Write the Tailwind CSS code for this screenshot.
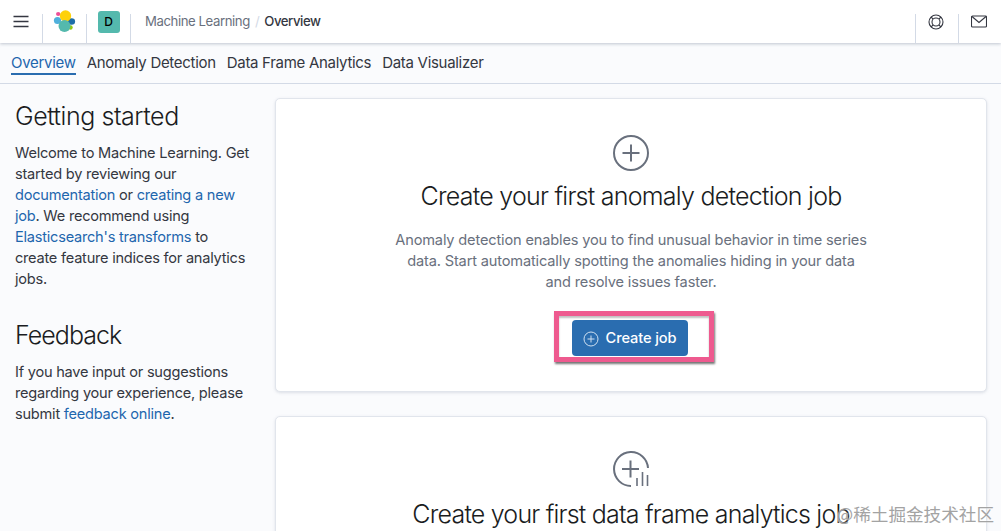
<!doctype html>
<html><head><meta charset="utf-8"><script src="https://cdn.jsdelivr.net/npm/@tailwindcss/browser@4"></script></head>
<body class="w-[1001px] h-[531px] overflow-hidden bg-[#fafbfd] font-['Inter','Noto_Sans',sans-serif] text-[#343741] relative">
<header class="h-[43px] bg-white flex items-stretch shadow-[0_1px_3px_rgba(152,162,179,0.6)] relative z-10">
  <div class="w-[43px] flex items-center justify-center border-r border-[#d3dae6] mt-[14px] pb-[14px]">
    <svg width="16" height="13" viewBox="0 0 16 13"><path d="M0.5 1.5h15M0.5 6.5h15M0.5 11.5h15" stroke="#343741" stroke-width="1.7" fill="none"/></svg>
  </div>
  <div class="w-[44px] flex items-start justify-center border-r border-[#d3dae6] mt-[14px]">
    <svg width="24" height="23" viewBox="0 0 24 23" class="-mt-[5px]">
      <ellipse cx="5.2" cy="5" rx="2.2" ry="2" fill="#ee5097"/>
      <circle cx="4.5" cy="11.5" r="3.6" fill="#4fb0dc"/>
      <ellipse cx="18.5" cy="12.5" rx="3.6" ry="3.2" fill="#1d6ea8"/>
      <circle cx="17.5" cy="18.5" r="2.2" fill="#93c90e"/>
      <circle cx="12.5" cy="7" r="5.7" fill="#fed10a"/>
      <circle cx="11.5" cy="17" r="6" fill="#54b9ad"/>
    </svg>
  </div>
  <div class="w-[44px] flex items-start justify-center border-r border-[#d3dae6] mt-[14px]">
    <div class="w-[22px] h-[22px] -mt-[3px] rounded-[3px] bg-[#54b9ad] flex items-center justify-center text-[12px] font-medium text-black">D</div>
  </div>
  <nav class="flex items-center gap-[5px] pl-[14px] text-[13.2px] leading-none tracking-[-0.43px]">
    <span class="text-[#69707d]">Machine Learning</span><span class="text-[#d3dae6]">/</span><span class="font-medium text-[#343741]">Overview</span>
  </nav>
  <div class="ml-auto flex items-stretch">
    <div class="w-[43px] border-l border-[#d3dae6] mt-[14px] flex justify-center items-start">
      <svg width="16" height="16" viewBox="0 0 16 16" class="-ml-[3px]" fill="none" stroke="#343741" stroke-width="1.1"><circle cx="8" cy="8" r="7"/><circle cx="8" cy="8" r="4"/><path d="M3 3l2.2 2.2M13 3l-2.2 2.2M3 13l2.2-2.2M13 13l-2.2-2.2"/></svg>
    </div>
    <div class="w-[43px] border-l border-[#d3dae6] mt-[14px] flex justify-center items-start">
      <svg width="16" height="13" viewBox="0 0 16 13" class="mt-[1px] -ml-[2px]" fill="none" stroke="#343741" stroke-width="1.1"><rect x="0.5" y="1" width="15" height="11" rx="1"/><path d="M1 1.5l7 6 7-6"/></svg>
    </div>
  </div>
</header>
<div class="h-[41px] border-b border-[#d3dae6] flex items-start gap-[11px] pl-[11px] pt-[9px] text-[15px] leading-[20px] tracking-[-0.3px]">
  <span class="text-[#1e66ad] border-b-2 border-[#2a6db0] pt-[1px]">Overview</span>
  <span class="pt-[1px]">Anomaly Detection</span><span class="pt-[1px]">Data Frame Analytics</span><span class="pt-[1px]">Data Visualizer</span>
</div>
<main class="flex pl-[15px] pr-[14px] pt-[14px] gap-[24px] items-start h-[447px] overflow-hidden">
  <aside class="w-[236px] shrink-0 text-[14.6px] leading-[21px] tracking-[-0.24px]">
    <h2 class="text-[25px] leading-[36px] font-light tracking-[-0.45px] text-[#1a1c21] mb-[9px]">Getting started</h2>
    <p>Welcome to Machine Learning. Get started by reviewing our <a class="text-[#1e66ad]">documentation</a> or <a class="text-[#1e66ad]">creating a new job</a>. We recommend using <a class="text-[#1e66ad]">Elasticsearch's transforms</a> to create feature indices for analytics jobs.</p>
    <h2 class="text-[25px] leading-[36px] font-light tracking-[-0.95px] text-[#1a1c21] mt-[27px] mb-[9px]">Feedback</h2>
    <p>If you have input or suggestions regarding your experience, please submit <a class="text-[#1e66ad]">feedback online</a>.</p>
  </aside>
  <section class="flex-1 flex flex-col gap-[24px] min-w-0">
    <div class="h-[294px] shrink-0 bg-white border border-[#e1e5ec] rounded-[5px] shadow-[0_1px_3px_rgba(152,162,179,0.3)] flex flex-col items-center pt-[36px]">
      <svg width="36" height="36" viewBox="0 0 36 36" fill="none" stroke="#69707d" stroke-width="2"><circle cx="18" cy="18" r="17"/><path d="M18 9.5v17M9.5 18h17"/></svg>
      <h3 class="mt-[7px] text-[25px] leading-[36px] font-light tracking-[-0.75px] text-[#1a1c21]">Create your first anomaly detection job</h3>
      <p class="mt-[16px] w-[475px] text-center text-[14.6px] leading-[21px] tracking-[-0.16px] text-[#69707d]">Anomaly detection enables you to find unusual behavior in time series data. Start automatically spotting the anomalies hiding in your data and resolve issues faster.</p>
      <div class="mt-[18px] ml-[5px] w-[160px] h-[51px] border-[5px] border-[#ee5a8f] shadow-[1px_2px_2px_rgba(0,0,0,0.55),inset_0_2px_2px_rgba(0,0,0,0.25)] flex justify-start pl-[13px] pt-[4px] bg-white">
        <button class="h-[36px] w-[116px] pt-[1px] rounded-[4px] bg-[#2a6db0] text-white text-[14.6px] tracking-[-0.1px] font-medium flex items-center justify-center gap-[7px]">
          <svg width="16" height="16" viewBox="0 0 16 16" fill="none" stroke="#cfe0f0" stroke-width="1"><circle cx="8" cy="8" r="7"/><path d="M8 4.5v7M4.5 8h7"/></svg>Create job
        </button>
      </div>
    </div>
    <div class="h-[200px] shrink-0 bg-white border border-[#e1e5ec] rounded-[5px] shadow-[0_1px_3px_rgba(152,162,179,0.3)] flex flex-col items-center pt-[34px]">
      <svg width="36" height="36" viewBox="0 0 36 36" fill="none" stroke="#69707d" stroke-width="2"><path d="M35 17A17 17 0 1 0 18 35"/><path d="M17.5 9.5v17M9 18h17"/><path d="M24 35v-8M29.5 35v-14M34.5 35v-11" stroke-width="1.6"/></svg>
      <h3 class="mt-[9px] text-[25px] leading-[36px] font-light tracking-[-0.8px] text-[#1a1c21]">Create your first data frame analytics job</h3>
    </div>
  </section>
</main>
<div class="absolute right-[7px] bottom-[5px] text-[17.6px] leading-[24px] text-[#a3a3a3] font-['Noto_Sans_CJK_SC',sans-serif] z-20 [text-shadow:0_0_2px_#fff]">@稀土掘金技术社区</div>
</body></html>
